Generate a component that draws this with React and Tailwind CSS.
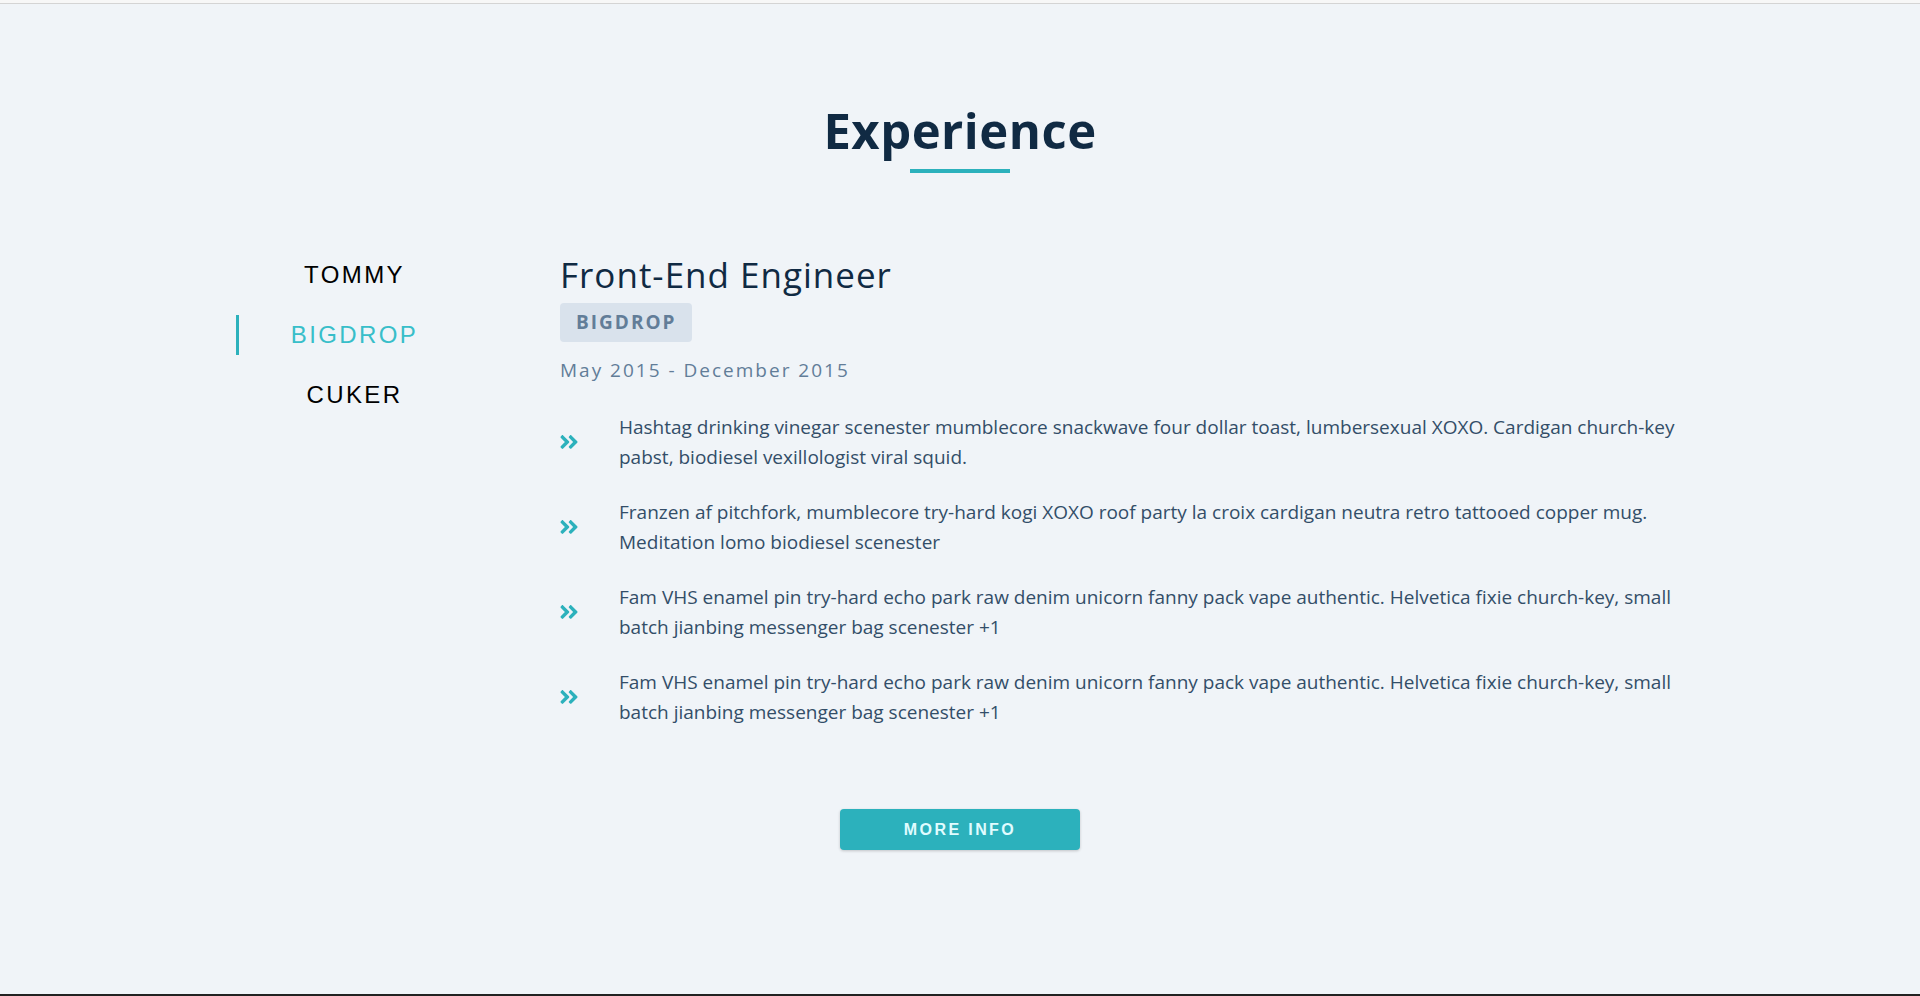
import React, { useState } from 'react';
import { FaAngleDoubleRight } from 'react-icons/fa';

const jobs = {
  TOMMY: {
    title: 'Full Stack Web Developer',
    company: 'TOMMY',
    dates: 'December 2015 - Present',
    duties: [],
  },
  BIGDROP: {
    title: 'Front-End Engineer',
    company: 'BIGDROP',
    dates: 'May 2015 - December 2015',
    duties: [
      'Hashtag drinking vinegar scenester mumblecore snackwave four dollar toast, lumbersexual XOXO. Cardigan church-key pabst, biodiesel vexillologist viral squid.',
      'Franzen af pitchfork, mumblecore try-hard kogi XOXO roof party la croix cardigan neutra retro tattooed copper mug. Meditation lomo biodiesel scenester',
      'Fam VHS enamel pin try-hard echo park raw denim unicorn fanny pack vape authentic. Helvetica fixie church-key, small batch jianbing messenger bag scenester +1',
      'Fam VHS enamel pin try-hard echo park raw denim unicorn fanny pack vape authentic. Helvetica fixie church-key, small batch jianbing messenger bag scenester +1',
    ],
  },
  CUKER: {
    title: 'Engineering Intern',
    company: 'CUKER',
    dates: '2015',
    duties: [],
  },
};

const sans = "font-['Segoe_UI','Open_Sans',sans-serif]";

const App = () => {
  const [active, setActive] = useState('BIGDROP');
  const job = jobs[active];

  return (
    <div className={`min-h-[996px] bg-[#f0f4f8] flex flex-col ${sans}`}>
      {/* strip left over from the section above */}
      <div className="h-[4px] bg-[#f7f7f7] border-b border-[#d4d4d4]" />

      <section className="flex-1 flex flex-col items-center">
        {/* Title */}
        <div className="mt-[94px] flex flex-col items-center">
          <h2 className="text-[49px] leading-[64px] font-bold tracking-[0.5px] text-[#102a43]">
            Experience
          </h2>
          <div className="mt-[7px] w-[100px] h-[4px] bg-[#2cb1bc]" />
        </div>

        {/* Jobs */}
        <div className="mt-[82px] w-[1448px] flex">
          {/* Tabs */}
          <div className="w-[234px] flex flex-col gap-5 font-['Liberation_Sans',Arial,sans-serif]">
            {Object.keys(jobs).map((name) => (
              <button
                key={name}
                onClick={() => setActive(name)}
                className={`h-10 text-[24px] tracking-[0.1em] border-l-[3px] ${
                  active === name
                    ? 'border-[#2cb1bc] text-[#38bec9]'
                    : 'border-transparent text-black'
                }`}
              >
                {name}
              </button>
            ))}
          </div>

          {/* Job info */}
          <article className="ml-[90px] flex-1">
            <h3 className="text-[35px] leading-[40px] tracking-[1px] text-[#102a43]">
              {job.title}
            </h3>
            <span className="inline-block mt-[8px] px-4 py-[5px] rounded bg-[#d9e2ec] text-[#627d98] text-[19px] font-bold tracking-[2px]">
              {job.company}
            </span>
            <p className="mt-[14px] text-[19px] tracking-[2px] text-[#627d98]">
              {job.dates}
            </p>
            <div className="mt-[28px] flex flex-col gap-[25px]">
              {job.duties.map((duty, i) => (
                <div key={i} className="flex items-center">
                  <FaAngleDoubleRight className="w-[22px] h-[22px] text-[#2cb1bc] shrink-0 -ml-[2px]" />
                  <p className="ml-[39px] max-w-[1060px] text-[19px] leading-[30px] text-[#334e68]">
                    {duty}
                  </p>
                </div>
              ))}
            </div>
          </article>
        </div>

        <button className="mt-[82px] w-[240px] h-[41px] rounded bg-[#2cb1bc] text-[#e0fcff] text-[16px] font-bold tracking-[0.15em] shadow-[0_1px_3px_rgba(0,0,0,0.2)] font-['Liberation_Sans',Arial,sans-serif]">
          MORE INFO
        </button>
      </section>

      <div className="h-[2px] bg-[#222222]" />
    </div>
  );
};

export default App;
